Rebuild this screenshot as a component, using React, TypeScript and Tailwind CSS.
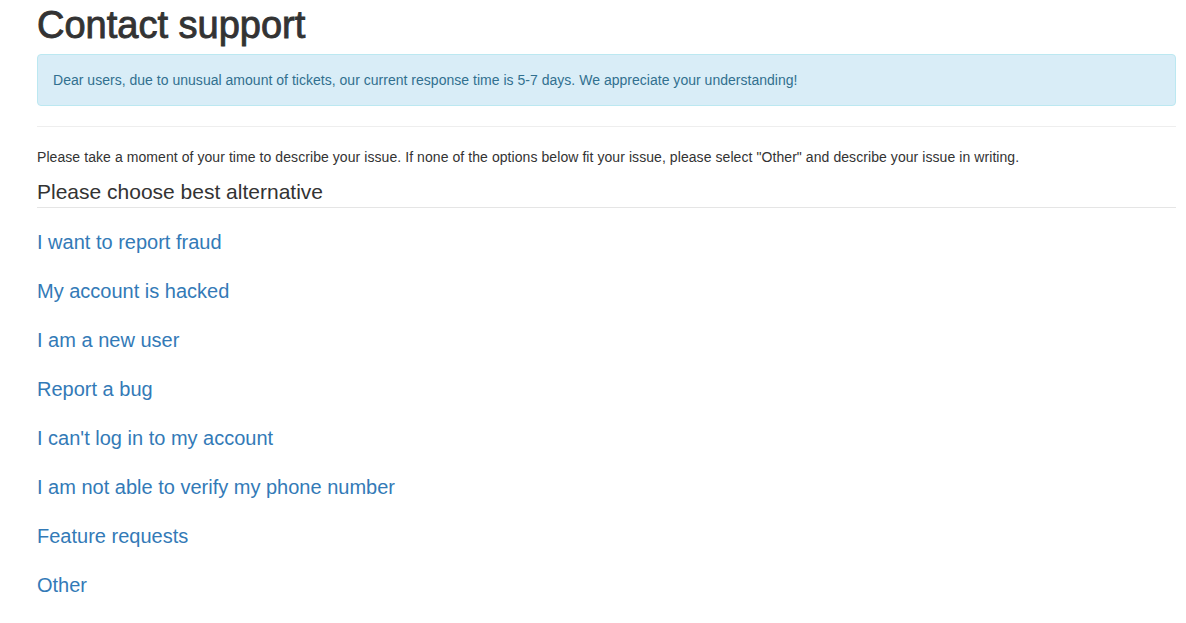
const options = [
  "I want to report fraud",
  "My account is hacked",
  "I am a new user",
  "Report a bug",
  "I can't log in to my account",
  "I am not able to verify my phone number",
  "Feature requests",
  "Other",
];

export default function App() {
  return (
    <div
      className="min-h-screen bg-white pl-[37px] pr-[10px] text-[14px] leading-[20px] text-[#333]"
      style={{ fontFamily: '"Liberation Sans", Arial, sans-serif' }}
    >
      <h1 className="pt-[5px] text-[38px] font-medium leading-[1.1] [-webkit-text-stroke:0.9px_#333]">
        Contact support
      </h1>
      <div className="mt-[7px] rounded-[4px] border border-[#bce8f1] bg-[#d9edf7] p-[15px] tracking-[0.02px] text-[#31708f]">
        Dear users, due to unusual amount of tickets, our current response time is 5-7 days. We appreciate your
        understanding!
      </div>
      <hr className="mt-[20px] mb-[20px] border-t border-[#eee]" />
      <p className="tracking-[0.07px]">
        Please take a moment of your time to describe your issue. If none of the options below fit your issue, please
        select "Other" and describe your issue in writing.
      </p>
      <div className="mt-[10px] border-b border-[#e5e5e5] text-[21px] leading-[30px]">
        Please choose best alternative
      </div>
      <div className="mt-[20px] flex flex-col gap-[20px]">
        {options.map((o) => (
          <a key={o} href="#" className="block text-[20px] leading-[29px] text-[#337ab7]">
            {o}
          </a>
        ))}
      </div>
    </div>
  );
}
